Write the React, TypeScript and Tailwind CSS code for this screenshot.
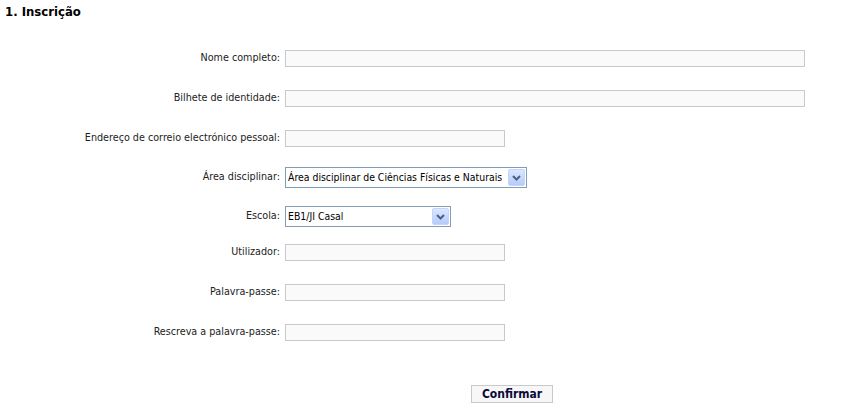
import { ReactNode } from 'react';

const fieldFont = { fontFamily: '"DejaVu Sans Condensed", "DejaVu Sans", sans-serif' };

const Label = ({ children }: { children: ReactNode }) => (
    <div className="w-[281px] pr-[1px] text-right text-[10.7px] text-[#222]">{children}</div>
);

const TextInput = ({ width, type = 'text' }: { width: string; type?: string }) => (
    <input
        type={type}
        className={`${width} h-[17px] border border-[#c9c9c9] bg-[#fafafa] px-1 text-[11px] outline-none`}
    />
);

const Chevron = () => (
    <svg width="9" height="6" viewBox="0 0 9 6">
        <path d="M1 1 L4.5 4.5 L8 1" fill="none" stroke="#4d6185" strokeWidth="2" />
    </svg>
);

const FakeSelect = ({ width, value }: { width: string; value: string }) => (
    <div className={`${width} h-[21px] flex items-center border border-[#7f9db9] bg-white`}>
        <span className="flex-1 pl-[2px] text-[10.4px] text-black whitespace-nowrap overflow-hidden">
            {value}
        </span>
        <div className="mr-[1px] w-[17px] h-[17px] shrink-0 flex items-center justify-center rounded-[2px] border border-[#c3d3fd] bg-gradient-to-b from-[#dbe6ff] to-[#b6cbf8]">
            <Chevron />
        </div>
    </div>
);

const Row = ({ label, children, className }: { label: string; children: ReactNode; className: string }) => (
    <div className={`flex items-center gap-[4px] ${className}`}>
        <Label>{label}</Label>
        {children}
    </div>
);

const App = () => {
    return (
        <div className="w-[865px] h-[409px] bg-white overflow-hidden" style={fieldFont}>
            <h1 className="pt-[4px] pl-[5px] text-[13px] leading-[16px] font-bold text-black">1. Inscrição</h1>

            <form className="flex flex-col">
                {/* texto */}
                <Row label="Nome completo:" className="mt-[30px]">
                    <TextInput width="w-[520px]" />
                </Row>
                <Row label="Bilhete de identidade:" className="mt-[23px]">
                    <TextInput width="w-[520px]" />
                </Row>
                <Row label="Endereço de correio electrónico pessoal:" className="mt-[23px]">
                    <TextInput width="w-[220px]" />
                </Row>

                {/* seleções */}
                <Row label="Área disciplinar:" className="mt-[20px]">
                    <FakeSelect width="w-[242px]" value="Área disciplinar de Ciências Físicas e Naturais" />
                </Row>
                <Row label="Escola:" className="mt-[18px]">
                    <FakeSelect width="w-[166px]" value="EB1/JI Casal" />
                </Row>

                {/* conta */}
                <Row label="Utilizador:" className="mt-[17px]">
                    <TextInput width="w-[220px]" />
                </Row>
                <Row label="Palavra-passe:" className="mt-[23px]">
                    <TextInput width="w-[220px]" type="password" />
                </Row>
                <Row label="Rescreva a palavra-passe:" className="mt-[23px]">
                    <TextInput width="w-[220px]" type="password" />
                </Row>

                <div className="mt-[44px] pl-[471px] flex">
                    <button
                        type="button"
                        className="w-[82px] h-[18px] border border-[#c9c9c9] bg-[#f7f7f7] text-[12px] leading-[16px] font-bold text-[#0a0a3a]"
                    >
                        Confirmar
                    </button>
                </div>
            </form>
        </div>
    );
};

export default App;
